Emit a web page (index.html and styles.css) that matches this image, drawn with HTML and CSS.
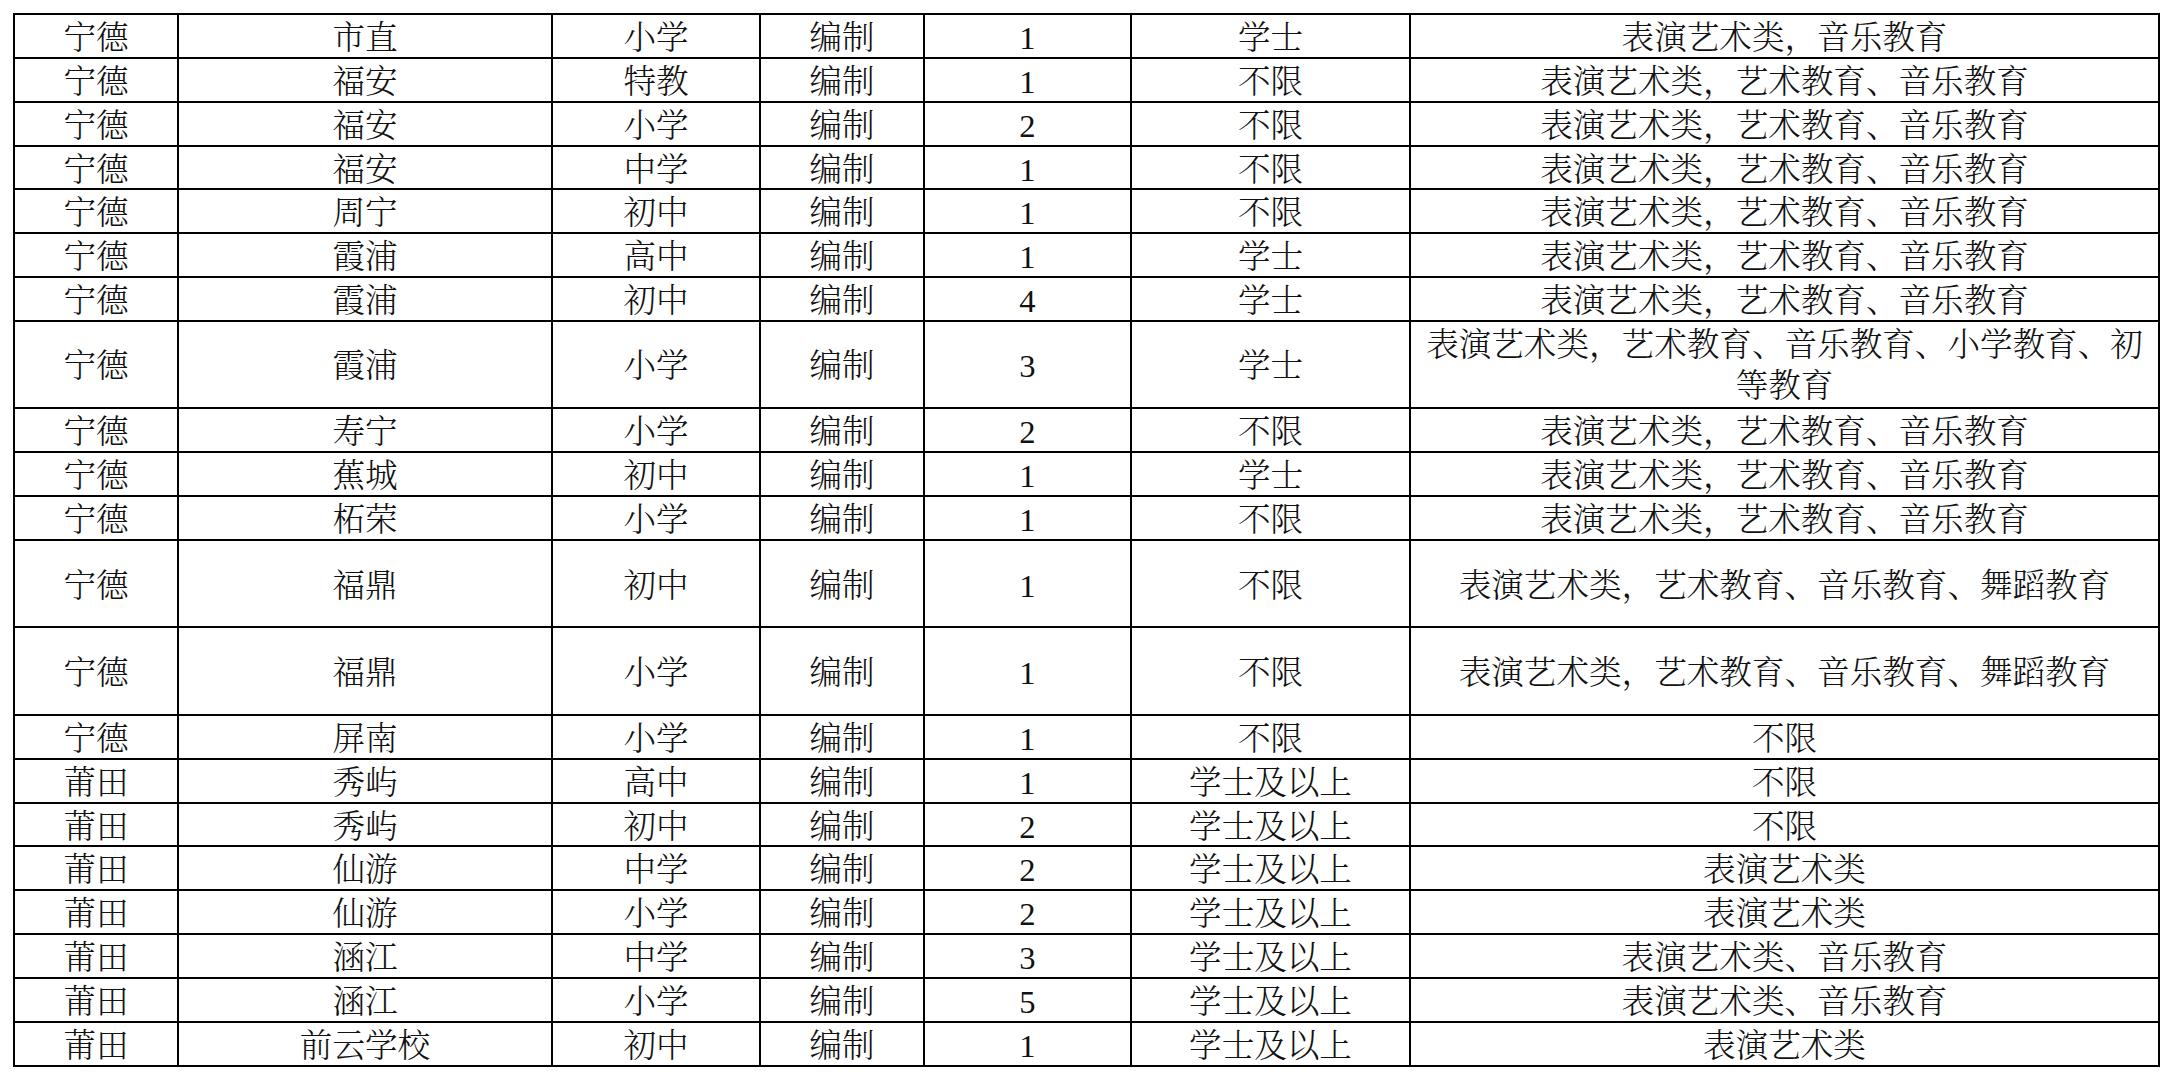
FILE: index.html
```html
<!DOCTYPE html>
<html lang="zh-CN">
<head>
<meta charset="utf-8">
<title>岗位表</title>
<link rel="stylesheet" href="styles.css">
</head>
<body>
<table class="grid">
<colgroup>
<col class="c1"><col class="c2"><col class="c3"><col class="c4"><col class="c5"><col class="c6"><col class="c7">
</colgroup>
<tbody>
<tr><td>宁德</td><td>市直</td><td>小学</td><td>编制</td><td class="num">1</td><td>学士</td><td>表演艺术类，音乐教育</td></tr>
<tr><td>宁德</td><td>福安</td><td>特教</td><td>编制</td><td class="num">1</td><td>不限</td><td>表演艺术类，艺术教育、音乐教育</td></tr>
<tr><td>宁德</td><td>福安</td><td>小学</td><td>编制</td><td class="num">2</td><td>不限</td><td>表演艺术类，艺术教育、音乐教育</td></tr>
<tr><td>宁德</td><td>福安</td><td>中学</td><td>编制</td><td class="num">1</td><td>不限</td><td>表演艺术类，艺术教育、音乐教育</td></tr>
<tr><td>宁德</td><td>周宁</td><td>初中</td><td>编制</td><td class="num">1</td><td>不限</td><td>表演艺术类，艺术教育、音乐教育</td></tr>
<tr><td>宁德</td><td>霞浦</td><td>高中</td><td>编制</td><td class="num">1</td><td>学士</td><td>表演艺术类，艺术教育、音乐教育</td></tr>
<tr><td>宁德</td><td>霞浦</td><td>初中</td><td>编制</td><td class="num">4</td><td>学士</td><td>表演艺术类，艺术教育、音乐教育</td></tr>
<tr class="tall wrap"><td>宁德</td><td>霞浦</td><td>小学</td><td>编制</td><td class="num">3</td><td>学士</td><td>表演艺术类，艺术教育、音乐教育、小学教育、初等教育</td></tr>
<tr><td>宁德</td><td>寿宁</td><td>小学</td><td>编制</td><td class="num">2</td><td>不限</td><td>表演艺术类，艺术教育、音乐教育</td></tr>
<tr><td>宁德</td><td>蕉城</td><td>初中</td><td>编制</td><td class="num">1</td><td>学士</td><td>表演艺术类，艺术教育、音乐教育</td></tr>
<tr><td>宁德</td><td>柘荣</td><td>小学</td><td>编制</td><td class="num">1</td><td>不限</td><td>表演艺术类，艺术教育、音乐教育</td></tr>
<tr class="tall"><td>宁德</td><td>福鼎</td><td>初中</td><td>编制</td><td class="num">1</td><td>不限</td><td>表演艺术类，艺术教育、音乐教育、舞蹈教育</td></tr>
<tr class="tall"><td>宁德</td><td>福鼎</td><td>小学</td><td>编制</td><td class="num">1</td><td>不限</td><td>表演艺术类，艺术教育、音乐教育、舞蹈教育</td></tr>
<tr><td>宁德</td><td>屏南</td><td>小学</td><td>编制</td><td class="num">1</td><td>不限</td><td>不限</td></tr>
<tr><td>莆田</td><td>秀屿</td><td>高中</td><td>编制</td><td class="num">1</td><td>学士及以上</td><td>不限</td></tr>
<tr><td>莆田</td><td>秀屿</td><td>初中</td><td>编制</td><td class="num">2</td><td>学士及以上</td><td>不限</td></tr>
<tr><td>莆田</td><td>仙游</td><td>中学</td><td>编制</td><td class="num">2</td><td>学士及以上</td><td>表演艺术类</td></tr>
<tr><td>莆田</td><td>仙游</td><td>小学</td><td>编制</td><td class="num">2</td><td>学士及以上</td><td>表演艺术类</td></tr>
<tr><td>莆田</td><td>涵江</td><td>中学</td><td>编制</td><td class="num">3</td><td>学士及以上</td><td>表演艺术类、音乐教育</td></tr>
<tr><td>莆田</td><td>涵江</td><td>小学</td><td>编制</td><td class="num">5</td><td>学士及以上</td><td>表演艺术类、音乐教育</td></tr>
<tr><td>莆田</td><td>前云学校</td><td>初中</td><td>编制</td><td class="num">1</td><td>学士及以上</td><td>表演艺术类</td></tr>
</tbody>
</table>
</body>
</html>
```

FILE: styles.css
```css
html, body {
  margin: 0;
  padding: 0;
  background: #fff;
}
body {
  padding: 13px 0 0 13px;
}
.grid {
  border-collapse: collapse;
  table-layout: fixed;
  width: 2147px;
  font-family: "Liberation Serif", "Noto Serif CJK SC", "Noto Sans CJK SC", serif;
  font-size: 32.6px;
  font-weight: 300;
  color: #111;
}
.c1 { width: 164px; }
.c2 { width: 374px; }
.c3 { width: 208px; }
.c4 { width: 164px; }
.c5 { width: 207px; }
.c6 { width: 279px; }
.c7 { width: 749px; }
.grid td {
  border: 2px solid #000;
  padding: 6px 10px 0;
  text-align: center;
  vertical-align: middle;
  line-height: 35.85px;
  height: 35.85px;
}
.grid .tall td {
  height: 79.5px;
}
.grid .wrap td {
  padding-top: 3px;
  line-height: 41px;
  height: 82.5px;
}
.grid td.num {
  font-weight: 400;
}
```
